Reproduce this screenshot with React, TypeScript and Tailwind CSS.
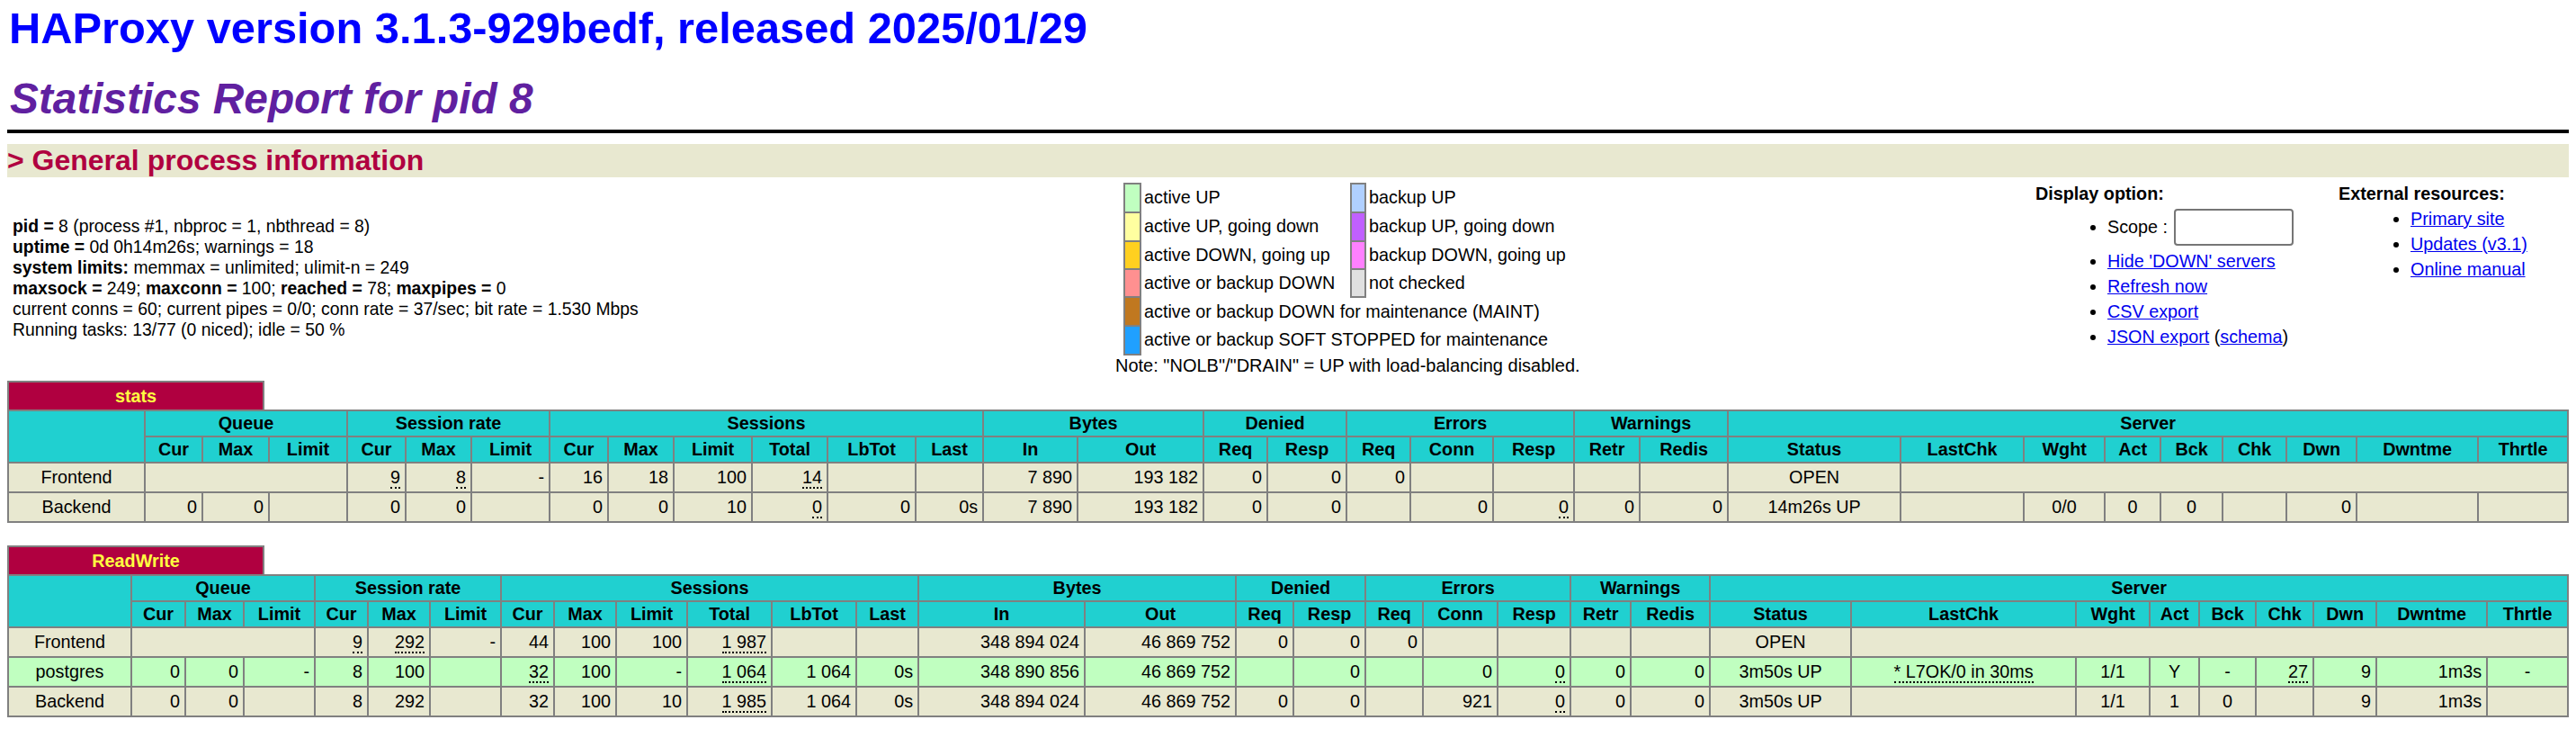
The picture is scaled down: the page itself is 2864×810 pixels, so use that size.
import React from "react";

type Cell = string | [string, number];

const GROUPS: [string, number][] = [
  ["Queue", 3], ["Session rate", 3], ["Sessions", 6], ["Bytes", 2], ["Denied", 2],
  ["Errors", 3], ["Warnings", 2], ["Server", 9],
];
const HEADS = [
  "Cur", "Max", "Limit", "Cur", "Max", "Limit", "Cur", "Max", "Limit", "Total", "LbTot", "Last",
  "In", "Out", "Req", "Resp", "Req", "Conn", "Resp", "Retr", "Redis", "Status", "LastChk", "Wght",
  "Act", "Bck", "Chk", "Dwn", "Dwntme", "Thrtle",
];
const CENTER = new Set([0, 22, 23, 24, 25, 26, 30]);

function StatTable({ name, edges, rows }: { name: string; edges: number[]; rows: { bg: string; cells: Cell[] }[] }) {
  const widths = edges.slice(1).map((e, i) => e - edges[i]);
  return (
    <div>
      <div className="w-[286px] h-[32px] border-2 border-b-0 border-[#808080] bg-[#b00040] text-[#ffff40] font-bold text-center leading-[30px]">
        {name}
      </div>
      <table className="table-fixed border-collapse w-[2848px] leading-[23px]">
        <colgroup>
          {widths.map((w, i) => (
            <col key={i} style={{ width: w }} />
          ))}
        </colgroup>
        <thead>
          <tr className="h-[29px] bg-[#20d0d0]">
            <th rowSpan={2} className="border-2 border-[#808080] p-0"></th>
            {GROUPS.map(([g, n]) => (
              <th key={g} colSpan={n} className="border-2 border-[#808080] p-0 font-bold text-center">
                {g}
              </th>
            ))}
          </tr>
          <tr className="h-[29px] bg-[#20d0d0]">
            {HEADS.map((h, i) => (
              <th key={i} className="border-2 border-[#808080] p-0 font-bold text-center">
                {h}
              </th>
            ))}
          </tr>
        </thead>
        <tbody>
          {rows.map((r, ri) => {
            let col = 0;
            return (
              <tr key={ri} className={r.bg === "up" ? "h-[33px] bg-[#c0ffc0]" : "h-[33px] bg-[#e8e8d0]"}>
                {r.cells.map((c, ci) => {
                  const text = typeof c === "string" ? c : c[0];
                  const span = typeof c === "string" ? 1 : c[1];
                  const center = CENTER.has(col);
                  col += span;
                  const dotted = text.startsWith("~");
                  return (
                    <td
                      key={ci}
                      colSpan={span}
                      className={
                        center
                          ? "border-2 border-[#808080] px-[5px] py-0 text-center whitespace-nowrap"
                          : "border-2 border-[#808080] px-[5px] py-0 text-right whitespace-nowrap"
                      }
                    >
                      {dotted ? (
                        <span className="border-b-2 border-dotted border-black">{text.slice(1)}</span>
                      ) : (
                        text
                      )}
                    </td>
                  );
                })}
              </tr>
            );
          })}
        </tbody>
      </table>
    </div>
  );
}

const STATS_EDGES = [9, 161, 225, 299, 386, 451, 524, 611, 676, 749, 836, 920, 1018, 1093, 1198, 1338, 1409, 1497, 1568, 1660, 1750, 1823, 1921, 2113, 2250, 2340, 2402, 2471, 2542, 2620, 2755, 2855];
const RW_EDGES = [9, 146, 206, 271, 350, 409, 478, 557, 616, 685, 764, 858, 952, 1021, 1206, 1374, 1438, 1518, 1582, 1665, 1746, 1813, 1901, 2058, 2308, 2390, 2445, 2508, 2572, 2642, 2765, 2855];

const STATS_ROWS = [
  {
    bg: "fe",
    cells: ["Frontend", ["", 3], "~9", "~8", "-", "16", "18", "100", "~14", "", "", "7 890", "193 182", "0", "0", "0", "", "", "", "", "OPEN", ["", 8]] as Cell[],
  },
  {
    bg: "fe",
    cells: ["Backend", "0", "0", "", "0", "0", "", "0", "0", "10", "~0", "0", "0s", "7 890", "193 182", "0", "0", "", "0", "~0", "0", "0", "14m26s UP", "", "0/0", "0", "0", "", "0", "", ""] as Cell[],
  },
];
const RW_ROWS = [
  {
    bg: "fe",
    cells: ["Frontend", ["", 3], "~9", "~292", "-", "44", "100", "100", "~1 987", "", "", "348 894 024", "46 869 752", "0", "0", "0", "", "", "", "", "OPEN", ["", 8]] as Cell[],
  },
  {
    bg: "up",
    cells: ["postgres", "0", "0", "-", "8", "100", "", "~32", "100", "-", "~1 064", "1 064", "0s", "348 890 856", "46 869 752", "", "0", "", "0", "~0", "0", "0", "3m50s UP", "~* L7OK/0 in 30ms", "1/1", "Y", "-", "~27", "9", "1m3s", "-"] as Cell[],
  },
  {
    bg: "fe",
    cells: ["Backend", "0", "0", "", "8", "292", "", "32", "100", "10", "~1 985", "1 064", "0s", "348 894 024", "46 869 752", "0", "0", "", "921", "~0", "0", "0", "3m50s UP", "", "1/1", "1", "0", "", "9", "1m3s", ""] as Cell[],
  },
];

function Swatch({ className }: { className: string }) {
  return <td className={`border-2 border-[#808080] p-0 ${className}`}></td>;
}

function Legend() {
  const tx = "pl-[3px] pr-0 py-0 whitespace-nowrap";
  return (
    <div className="w-[1023px] pt-[6px]">
      <table className="table-fixed border-collapse ml-[9px] w-[520px]">
        <colgroup>
          <col className="w-[18px]" />
          <col className="w-[234px]" />
          <col className="w-[16px]" />
          <col />
        </colgroup>
        <tbody>
          <tr className="h-[32px]">
            <Swatch className="bg-[#c0ffc0]" />
            <td className={tx}>active UP</td>
            <Swatch className="bg-[#b0d0ff]" />
            <td className={tx}>backup UP</td>
          </tr>
          <tr className="h-[32px]">
            <Swatch className="bg-[#ffffa0]" />
            <td className={tx}>active UP, going down</td>
            <Swatch className="bg-[#c060ff]" />
            <td className={tx}>backup UP, going down</td>
          </tr>
          <tr className="h-[31px]">
            <Swatch className="bg-[#ffd020]" />
            <td className={tx}>active DOWN, going up</td>
            <Swatch className="bg-[#ff80ff]" />
            <td className={tx}>backup DOWN, going up</td>
          </tr>
          <tr className="h-[31px]">
            <Swatch className="bg-[#ff9090]" />
            <td className={tx}>active or backup DOWN</td>
            <Swatch className="bg-[#e0e0e0]" />
            <td className={tx}>not checked</td>
          </tr>
          <tr className="h-[32px]">
            <Swatch className="bg-[#c07820]" />
            <td colSpan={3} className={tx}>active or backup DOWN for maintenance (MAINT)</td>
          </tr>
          <tr className="h-[32px]">
            <Swatch className="bg-[#20a0ff]" />
            <td colSpan={3} className={tx}>active or backup SOFT STOPPED for maintenance</td>
          </tr>
        </tbody>
      </table>
      <div className="leading-[23px] text-[20px]">Note: "NOLB"/"DRAIN" = UP with load-balancing disabled.</div>
    </div>
  );
}

const link = "text-[#0000ee] underline";

export default function App() {
  return (
    <div className="bg-white text-black font-['Liberation_Sans',Arial,sans-serif] text-[19.8px] w-[2864px] h-[810px] px-2 pt-[4px] overflow-hidden">
      <h1 className="text-[48.8px] leading-[54px] font-bold text-[#0000ff] pl-[2px]">HAProxy version 3.1.3-929bedf, released 2025/01/29</h1>
      <h2 className="mt-[25px] text-[47.8px] leading-[54px] font-bold italic text-[#6020a0] pl-[3px]">Statistics Report for pid 8</h2>
      <hr className="mt-[7px] border-0 h-[4px] bg-black" />
      <h3 className="mt-[12px] h-[37px] bg-[#e8e8d0] text-[#b00040] text-[32px] leading-[37px] font-bold">&gt; General process information</h3>

      <div className="flex h-[226px]">
        <div className="w-[1232px] pt-[43px] pl-[6px] leading-[23px] text-[19.35px]">
          <div><b>pid = </b>8 (process #1, nbproc = 1, nbthread = 8)</div>
          <div><b>uptime = </b>0d 0h14m26s; warnings = 18</div>
          <div><b>system limits:</b> memmax = unlimited; ulimit-n = 249</div>
          <div><b>maxsock = </b>249; <b>maxconn = </b>100; <b>reached = </b>78; <b>maxpipes = </b>0</div>
          <div>current conns = 60; current pipes = 0/0; conn rate = 37/sec; bit rate = 1.530 Mbps</div>
          <div>Running tasks: 13/77 (0 niced); idle = 50 %</div>
        </div>
        <Legend />
        <div className="w-[337px] pt-[7px]">
          <div className="font-bold leading-[23px]">Display option:</div>
          <ul className="list-disc pl-[80px] mt-[5px] leading-[28px]">
            <li className="h-[41px] mb-[3px] leading-[41px]">
              Scope :
              <input className="ml-[7px] w-[133px] h-[41px] border-2 border-[#767676] rounded-[4px] bg-white align-top" />
            </li>
            <li><a className={link}>Hide 'DOWN' servers</a></li>
            <li><a className={link}>Refresh now</a></li>
            <li><a className={link}>CSV export</a></li>
            <li><a className={link}>JSON export</a> (<a className={link}>schema</a>)</li>
          </ul>
        </div>
        <div className="pt-[7px]">
          <div className="font-bold leading-[23px]">External resources:</div>
          <ul className="list-disc pl-[80px] mt-[2px] leading-[28px]">
            <li><a className={link}>Primary site</a></li>
            <li><a className={link}>Updates (v3.1)</a></li>
            <li><a className={link}>Online manual</a></li>
          </ul>
        </div>
      </div>

      <StatTable name="stats" edges={STATS_EDGES} rows={STATS_ROWS} />
      <div className="h-[25px]"></div>
      <StatTable name="ReadWrite" edges={RW_EDGES} rows={RW_ROWS} />
    </div>
  );
}
